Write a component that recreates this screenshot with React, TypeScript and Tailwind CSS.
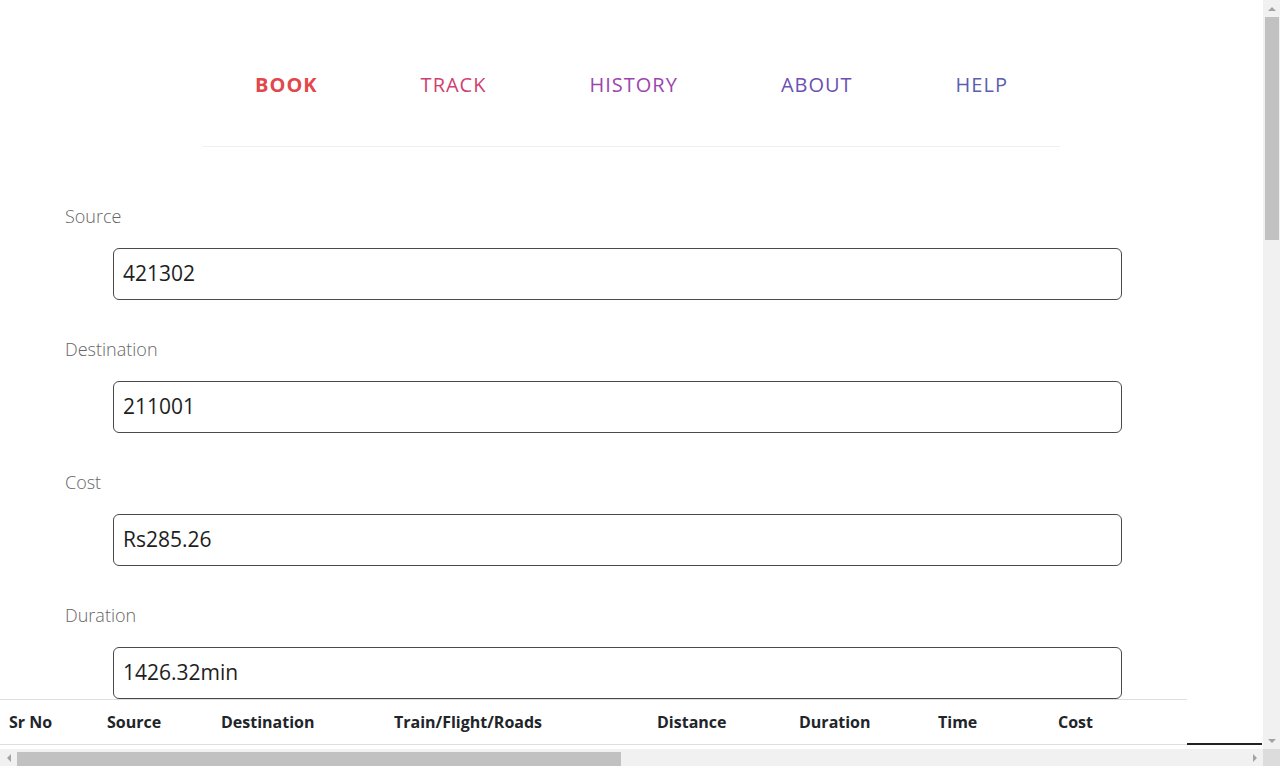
import React from 'react';

const navItems = [
  { label: 'BOOK', color: 'text-[#e2474b]', bold: true },
  { label: 'TRACK', color: 'text-[#cf3f70]', bold: false },
  { label: 'HISTORY', color: 'text-[#9c45ad]', bold: false },
  { label: 'ABOUT', color: 'text-[#6d4fb2]', bold: false },
  { label: 'HELP', color: 'text-[#5a5eaf]', bold: false },
];

const fields = [
  { label: 'Source', value: '421302' },
  { label: 'Destination', value: '211001' },
  { label: 'Cost', value: 'Rs285.26' },
  { label: 'Duration', value: '1426.32min' },
];

const columns = [
  { name: 'Sr No', w: 'w-[98px]' },
  { name: 'Source', w: 'w-[114px]' },
  { name: 'Destination', w: 'w-[173px]' },
  { name: 'Train/Flight/Roads', w: 'w-[263px]' },
  { name: 'Distance', w: 'w-[142px]' },
  { name: 'Duration', w: 'w-[139px]' },
  { name: 'Time', w: 'w-[120px]' },
  { name: 'Cost', w: 'w-[138px]' },
];

const Arrow = ({ dir }: { dir: 'up' | 'down' | 'left' | 'right' }) => {
  const pts = {
    up: '0,4 4,0 8,4',
    down: '0,0 8,0 4,4',
    left: '4,0 4,8 0,4',
    right: '0,0 4,4 0,8',
  }[dir];
  const vertical = dir === 'up' || dir === 'down';
  return (
    <svg width={vertical ? 8 : 4} height={vertical ? 4 : 8} viewBox={vertical ? '0 0 8 4' : '0 0 4 8'}>
      <polygon points={pts} fill="#a3a3a3" />
    </svg>
  );
};

export default function App() {
  return (
    <div className="w-[1280px] h-[766px] flex flex-col overflow-hidden bg-white font-['Open_Sans',sans-serif]">
      <div className="flex flex-1 min-h-0">
        <div className="flex-1 min-w-0 overflow-hidden">
          {/* nav */}
          <nav className="flex justify-center gap-[103px] pt-[70px] pb-[47px]">
            {navItems.map((item) => (
              <span
                key={item.label}
                className={`text-[20px] leading-[29px] tracking-[1px] ${item.color} ${item.bold ? 'font-bold' : 'font-normal'}`}
              >
                {item.label}
              </span>
            ))}
          </nav>
          <div className="mx-auto w-[857px] border-t border-[#efefef]" />

          {/* form */}
          <div className="pt-[57px] pl-[65px]">
            {fields.map((f) => (
              <div key={f.label} className="mb-[37px] last:mb-0">
                <div className="text-[18px] leading-[24px] font-light text-[#666]">{f.label}</div>
                <div className="pl-[48px] pt-[20px]">
                  <div className="w-[1009px] h-[52px] border border-[#4a4a4a] rounded-[6px] flex items-center pl-[9px] text-[21px] text-[#1e1e1e]">
                    {f.value}
                  </div>
                </div>
              </div>
            ))}
          </div>

          {/* table head */}
          <div className="flex w-[1400px]">
            <div className="flex border-y border-[#dedede] h-[46px] items-center">
              {columns.map((c) => (
                <div key={c.name} className={`${c.w} pl-[9px] text-[16px] font-bold text-[#212529] whitespace-nowrap`}>
                  {c.name}
                </div>
              ))}
            </div>
            <div className="w-[75px] h-[46px] border-b-2 border-[#222]" />
          </div>
        </div>

        {/* vertical scrollbar */}
        <div className="w-[17px] bg-[#f1f1f1] flex flex-col items-center">
          <div className="h-[17px] flex items-center justify-center"><Arrow dir="up" /></div>
          <div className="w-[14px] h-[223px] bg-[#c1c1c1]" />
          <div className="flex-1" />
          <div className="h-[17px] flex items-center justify-center"><Arrow dir="down" /></div>
        </div>
      </div>

      {/* horizontal scrollbar */}
      <div className="h-[17px] flex">
        <div className="flex-1 bg-[#f1f1f1] flex items-center">
          <div className="w-[17px] h-full flex items-center justify-center"><Arrow dir="left" /></div>
          <div className="w-[604px] h-[14px] bg-[#c1c1c1] mt-[2px]" />
          <div className="flex-1" />
          <div className="w-[17px] h-full flex items-center justify-center"><Arrow dir="right" /></div>
        </div>
        <div className="w-[17px] bg-[#dcdcdc]" />
      </div>
    </div>
  );
}
